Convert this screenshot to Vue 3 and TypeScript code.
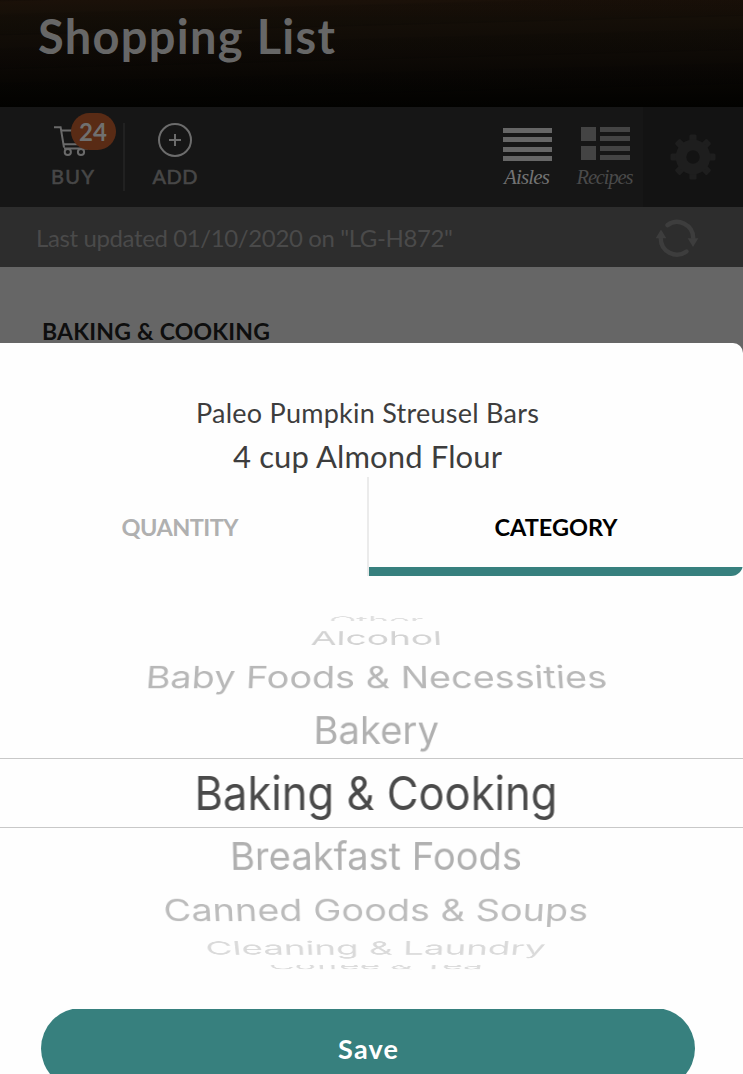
<script setup lang="ts">
interface WheelRow {
  label: string
  width: number
  height: number
  gap: number
  angle: number
  color: string
  shift?: number
}

const rows: WheelRow[] = [
  { label: 'Other', width: 94, height: 5, gap: 0, angle: 75, color: '#e0e0e0', shift: 2.2 },
  { label: 'Alcohol', width: 131, height: 27, gap: 3.5, angle: 63.5, color: '#d3d3d3' },
  { label: 'Baby Foods & Necessities', width: 461, height: 41, gap: 5, angle: 41.5, color: '#b8b8b8' },
  { label: 'Bakery', width: 125, height: 52, gap: 7, angle: 22, color: '#b0b0b0' },
  { label: 'Baking & Cooking', width: 363, height: 70, gap: 2, angle: 0, color: '#4a4a4a' },
  { label: 'Breakfast Foods', width: 292, height: 53, gap: 1, angle: -22, color: '#b0b0b0' },
  { label: 'Canned Goods & Soups', width: 425, height: 43, gap: 6, angle: -41.5, color: '#bcbcbc' },
  { label: 'Cleaning & Laundry', width: 340, height: 26, gap: 4, angle: -63.5, color: '#dadada' },
  { label: 'Coffee & Tea', width: 214, height: 4.5, gap: 4, angle: -76, color: '#dcdcdc', shift: -1.2 },
]

// Tracks a label so that its advance width equals the given number of pixels.
const vTrack = {
  mounted(el: HTMLElement, binding: { value: number }) {
    const count = (el.textContent ?? '').length
    const spacing = (binding.value - el.getBoundingClientRect().width) / (count - 1)
    el.style.letterSpacing = `${spacing}px`
    el.style.marginRight = `${-spacing}px`
  },
}

// Tilts a wheel row around the horizontal axis and stretches it to its width.
const vTilt = {
  mounted(el: HTMLElement, binding: { value: WheelRow }) {
    const row = binding.value
    const stretch = row.width / el.offsetWidth
    el.style.transform = `translateY(${row.shift ?? 0}px) perspective(2500px) rotateX(${row.angle}deg) scaleX(${stretch})`
  },
}

const teeth = [0, 45, 90, 135, 180, 225, 270, 315]
</script>

<template>
  <div class="screen">
    <header class="hero"><h1><span v-track="297">Shopping List</span></h1></header>

    <nav class="toolbar">
      <div class="tool buy">
        <div class="icon">
          <svg width="40" height="36" viewBox="0 0 40 36" fill="none" stroke="#6a6a6a" stroke-width="2">
            <path d="M1 5.2H7.6L11 25.5M8.5 8.5H36L33 22.5M10 22.3H35M11 26.6H35" />
            <circle cx="14.8" cy="30" r="3.1" /><circle cx="28" cy="30" r="3.1" />
          </svg>
          <span class="badge"><span v-track="28">24</span></span>
        </div>
        <span class="caption"><span v-track="43">BUY</span></span>
      </div>
      <i class="divider"></i>
      <div class="tool add">
        <div class="icon">
          <svg width="36" height="36" viewBox="0 0 36 36" fill="none" stroke="#6c6c6c" stroke-width="2">
            <circle cx="18" cy="18" r="16" /><path d="M12 18H24M18 12V24" />
          </svg>
        </div>
        <span class="caption"><span v-track="45">ADD</span></span>
      </div>
      <div class="view aisles">
        <svg width="49" height="34" viewBox="0 0 49 34" fill="#666">
          <path d="M0 1h49v5H0zM0 10h49v5H0zM0 20h49v5H0zM0 29h49v5H0z" />
        </svg>
        <em v-track="46">Aisles</em>
      </div>
      <div class="view recipes">
        <svg width="49" height="34" viewBox="0 0 49 34" fill="#444">
          <path d="M0 0h15v14H0zM0 19h15v14H0zM19 0h30v5H19zM19 9h30v5H19zM19 19h30v5H19zM19 28h30v5H19z" />
        </svg>
        <em v-track="57">Recipes</em>
      </div>
      <div class="settings">
        <svg width="46" height="46" viewBox="-23 -23 46 46" fill="#1e1e1e">
          <rect v-for="a in teeth" :key="a" x="-3.6" y="-22.5" width="7.2" height="10" rx="1.5" :transform="`rotate(${a})`" />
          <circle r="12" fill="none" stroke="#1e1e1e" stroke-width="10.6" />
        </svg>
      </div>
    </nav>

    <div class="status">
      <span v-track="417">Last updated 01/10/2020 on "LG-H872"</span>
      <svg width="44" height="40" viewBox="0 0 44 40" fill="none" stroke="#3d3d3d" stroke-width="4.4" stroke-linecap="round">
        <path d="M12.5 7.1A16.2 16.2 0 0 1 38.2 20" />
        <path d="M31.5 33.5A16.2 16.2 0 0 1 5.8 20" />
        <path d="M6 11.5L11.3 20.2H.7zM38 29L43.3 20.2H32.7z" fill="#3d3d3d" stroke="none" />
      </svg>
    </div>

    <div class="list"><h2><span v-track="228">BAKING &amp; COOKING</span></h2></div>

    <section class="sheet">
      <div class="recipe"><span v-track="343">Paleo Pumpkin Streusel Bars</span></div>
      <div class="ingredient"><span v-track="269">4 cup Almond Flour</span></div>
      <div class="tabs">
        <div class="tab"><span v-track="117">QUANTITY</span></div>
        <div class="tab active"><span v-track="123">CATEGORY</span></div>
      </div>
      <div class="wheel">
        <div
          v-for="(row, i) in rows"
          :key="row.label"
          class="row"
          :class="{ selected: i === 4 }"
          :style="{ height: row.height + 'px', marginTop: row.gap + 'px', color: row.color }"
        >
          <span v-tilt="row">{{ row.label }}</span>
        </div>
      </div>
      <button class="save" type="button"><span v-track="60">Save</span></button>
    </section>
  </div>
</template>

<style>
body {
  margin: 0;
}
</style>

<style scoped>
.screen {
  width: 743px;
  height: 1074px;
  overflow: hidden;
  display: flex;
  flex-direction: column;
  background: #666;
  font-family: Lato, "Open Sans", sans-serif;
  white-space: nowrap;
}
.screen > * {
  flex: none;
}
span {
  display: inline-block;
}
h1,
h2 {
  margin: 0;
}
.hero {
  height: 107px;
  box-sizing: border-box;
  padding: 6px 0 0 38px;
  background:
    repeating-linear-gradient(178.5deg, rgba(0, 0, 0, 0.16) 0 1px, transparent 2px 13px, rgba(0, 0, 0, 0.1) 15px 34px),
    linear-gradient(#1b1109 0, #150f08 18px, #0e0a06 55px, #040301 98px, #020200 100%);
}
h1 {
  font-size: 47px;
  line-height: 60px;
  font-weight: 700;
  color: #676767;
}
.toolbar {
  height: 100px;
  display: flex;
  background: #161616;
}
.tool {
  display: flex;
  flex-direction: column;
  align-items: center;
  padding-top: 15px;
  box-sizing: border-box;
}
.buy {
  width: 43px;
  margin-left: 51px;
}
.add {
  width: 48px;
  margin-left: 26px;
}
.icon {
  position: relative;
  height: 36px;
  width: 36px;
}
.icon svg {
  display: block;
}
.buy .icon {
  width: 40px;
}
.badge {
  position: absolute;
  left: 18px;
  top: -9px;
  width: 45px;
  height: 37px;
  border-radius: 19px;
  background: #592b15;
  color: #707070;
  font-size: 24px;
  line-height: 37px;
  font-weight: 700;
  text-align: center;
}
.caption {
  margin-top: 5px;
  font-size: 20px;
  line-height: 26px;
  font-weight: 400;
  -webkit-text-stroke: 0.6px currentColor;
  color: #474747;
}
.divider {
  width: 2px;
  height: 68px;
  margin: 16px 0 0 29px;
  background: #212121;
}
.view {
  width: 60px;
  display: flex;
  flex-direction: column;
  align-items: center;
  padding-top: 20px;
}
.view svg {
  display: block;
  flex: none;
}
.view em {
  font: italic 21px/30px "Liberation Serif", serif;
  margin-top: 1px;
}
.aisles {
  margin-left: 298px;
  color: #737373;
}
.recipes {
  margin-left: 18px;
  color: #4a4a4a;
}
.recipes em {
  font-size: 20.5px;
}
.settings {
  flex: 1;
  margin-left: 8px;
  padding: 26.5px 0 0 26.5px;
  background: #131313;
}
.settings svg {
  display: block;
}
.status {
  height: 60px;
  display: flex;
  align-items: center;
  justify-content: space-between;
  padding: 1px 44px 0 36px;
  box-sizing: border-box;
  background: #2d2d2d;
  color: #4a4a4a;
  font-size: 24px;
  line-height: 60px;
}
.list {
  height: 76px;
  padding: 0 0 0 42px;
  box-sizing: border-box;
}
h2 {
  padding-top: 48px;
  font-size: 23px;
  line-height: 32px;
  font-weight: 700;
  color: #0e0e0e;
  height: 28px;
}
.sheet {
  height: 731px;
  background: #fefefe;
  border-radius: 0 10px 0 0;
  display: flex;
  flex-direction: column;
  overflow: hidden;
}
.sheet > * {
  flex: none;
}
.recipe,
.ingredient {
  width: 735px;
  text-align: center;
  color: #3d3d3d;
}
.recipe {
  margin-top: 50px;
  font-size: 27px;
  line-height: 40px;
}
.ingredient {
  margin-top: 2px;
  font-size: 31px;
  line-height: 42px;
}
.tabs {
  height: 99px;
  display: flex;
  overflow: hidden;
  border-radius: 0 0 12px 0;
}
.tab {
  width: 367px;
  box-sizing: border-box;
  padding-right: 7px;
  text-align: center;
  font-size: 23.5px;
  line-height: 101px;
  font-weight: 700;
  color: #b0b0b0;
}
.tab.active {
  width: 376px;
  padding-right: 0;
  border-left: 2px solid #ebebeb;
  color: #000;
  background: linear-gradient(#37807e, #37807e) 0 100% / 100% 9.5px no-repeat;
  background-clip: padding-box;
  height: 99px;
}
.wheel {
  height: 394px;
  padding: 39.5px 0 0 0;
  box-sizing: border-box;
  font-family: Inter, Roboto, sans-serif;
  font-size: 41px;
}
.row {
  display: flex;
  align-items: center;
  justify-content: center;
  padding-left: 9px;
  box-sizing: border-box;
  overflow: hidden;
  line-height: 50px;
}
.row span {
  flex: none;
}
.selected {
  font-size: 46.5px;
  border-top: 1px solid #c8c8c8;
  border-bottom: 1px solid #c8c8c8;
}
.save {
  margin: 38px 0 0 41px;
  width: 654px;
  height: 81px;
  border: 0;
  padding: 0;
  border-radius: 41px;
  clip-path: inset(1px 0 0 0);
  background: #37807e;
  color: #fff;
  font: 700 27px/81px Lato, sans-serif;
}
</style>
